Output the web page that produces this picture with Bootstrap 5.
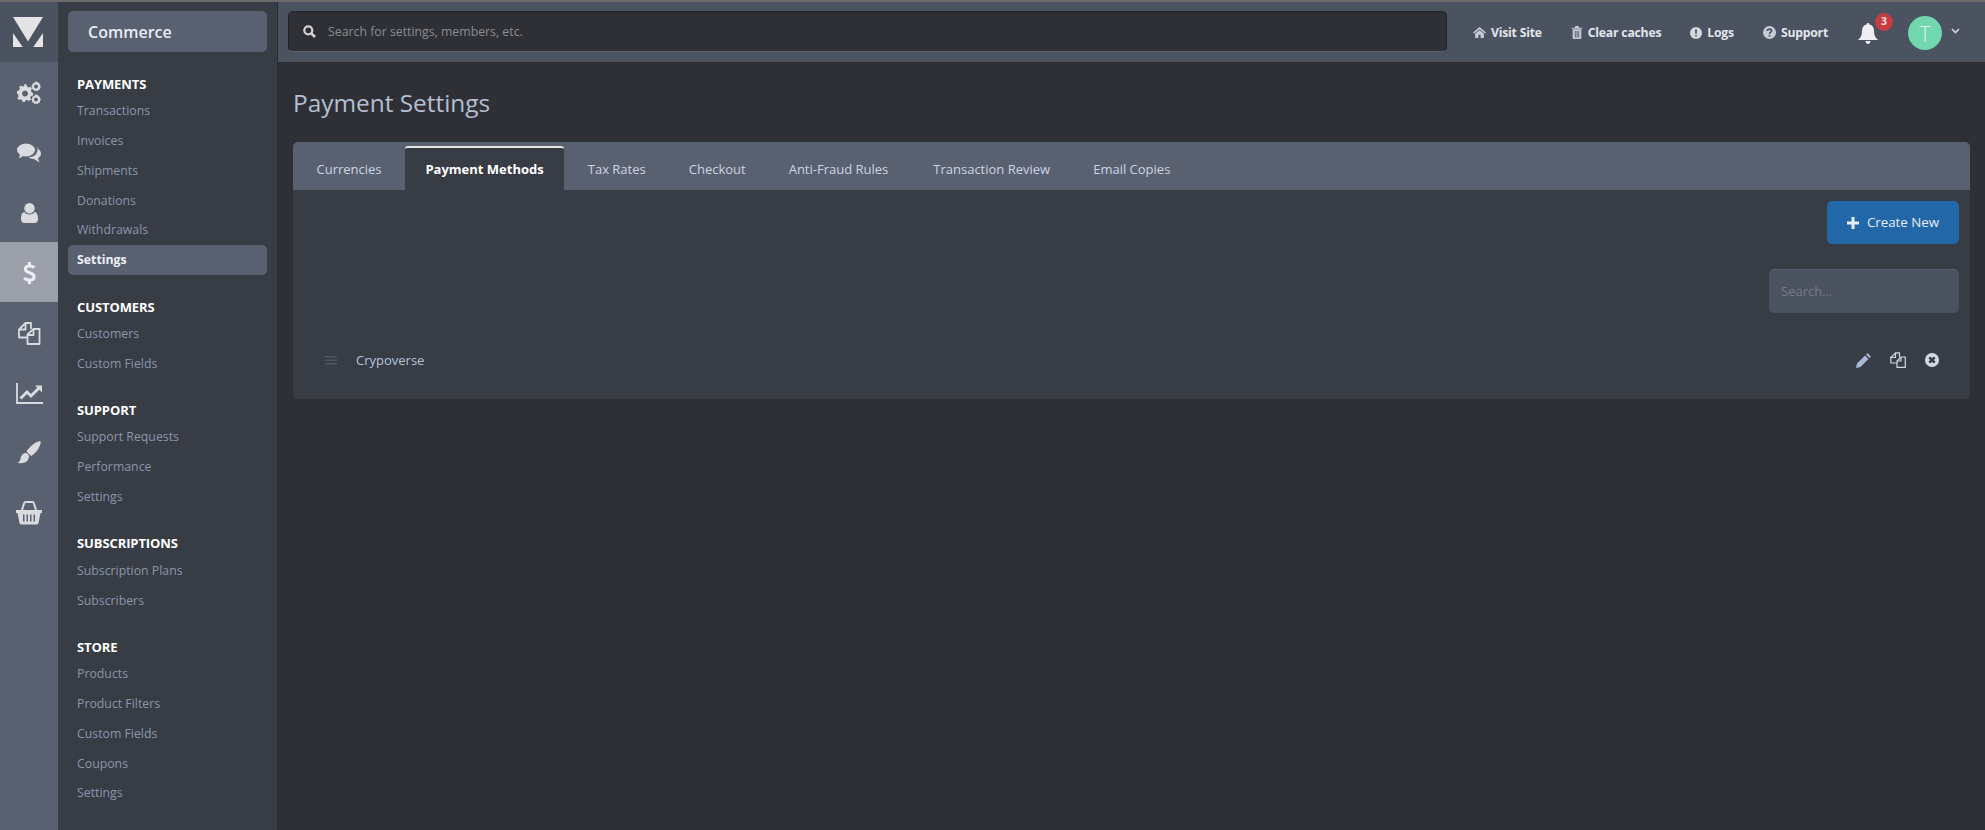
<!DOCTYPE html>
<html lang="en"><head><meta charset="utf-8"><title>Payment Settings</title>
<link href="https://cdn.jsdelivr.net/npm/bootstrap@5.3.0/dist/css/bootstrap.min.css" rel="stylesheet">
<style>
html,body{height:100%;overflow:hidden}
body{background:#2f3036;font-family:"Open Sans",sans-serif;font-size:13px;color:#b4bfd4}
.shell{height:830px;border-top:2px solid #6b6b6b}
.rail{width:58px;background:#596070;flex:none}
.rail-logo{height:60px;background:#4b5361}
.rail-logo svg{margin-right:2px}
.rail-item{height:60px;color:#d9dbdf}
.rail-item svg{margin-top:2px}
.rail-item.on{background:#9a9fa9}
.side{width:220px;background:#383c45;flex:none;border-right:1px solid #2c2d32;padding:9px 10px 0 10px}
.side-title{height:41px;background:#596070;border-radius:5px;color:#e9edf5;font-size:16px;font-weight:600;padding-left:20px;margin-bottom:22px}
.sec-h{color:#fff;font-weight:700;font-size:13px;padding-left:9px;height:20px;line-height:20px;text-transform:uppercase;margin-bottom:2.3px;letter-spacing:-.1px}
.sec{margin-bottom:21.6px}
.side-link{display:block;height:29.8px;line-height:30.8px;padding-left:9px;color:#8a97ac;text-decoration:none;border-radius:5px;font-size:12.3px}
.side-link.on{background:#596070;color:#edf0f5;font-weight:700}
.topbar{height:61px;background:#4b5361;padding:0 25px 1px 10px;border-bottom:1px solid #2c2d32;flex:none}
.top-search{height:41px;width:1159px;background:#2f3036;border:1px solid #23242a;border-bottom-color:#596070;border-radius:5px;padding-left:14px;color:#8a8d94;gap:12px;font-size:12.3px}
.top-search span{padding-top:2px}
.top-right{padding-top:3px}
.top-link{color:#e3e6eb;font-weight:700;font-size:12.2px;text-decoration:none;gap:5px;letter-spacing:-.2px;margin-right:29px}
.bell-wrap{width:20px;margin-right:30px;margin-left:1px}
.bell-badge{top:-10px;left:17px;width:18px;height:18px;background:#c73c3e;color:#f3e3e3;font-size:10.5px;font-weight:700}
.avatar{width:34px;height:34px;background:#70d7ae;color:#dff1ea;font-size:22px;font-weight:300}
.caret-up{margin-left:9px;margin-top:-4px}
.page-h{color:#b4bfd4;font-size:24.4px;font-weight:500;margin:0;line-height:33px;padding:23px 0 23px 15px}
.panel{margin:0 15px;background:#383c45;border-radius:5px;height:257px}
.tabs-head{height:48px;background:#596070;border-radius:5px 5px 0 0}
.tab-i{height:44px;margin-top:4px;padding:0 21.5px;line-height:46px;color:#ccd5e3;text-decoration:none;font-size:13px}
.tab-first{padding:0 23.500px}
.tab-tax{padding:0 21.5px 0 23.7px}
.tab-wide{padding:0 23.5px 0 21.5px}
.tab-i.on{background:#383c45;color:#fff;font-weight:700;border-top:2px solid #e6e6e6;border-radius:3px 3px 0 0;line-height:42px;padding:0;width:159px;text-align:center}
.make-btn{width:132px;height:43px;background:#2268a8;color:#e6edf5;border-radius:5px;font-size:13.3px;gap:8px;margin:11px 11px 0 0;padding:1px 0 0;border:0}
.find-box{width:190px;height:44px;background:#4b5361;border:0;border-top:1px solid #596070;border-radius:5px;margin:25px 11px 0 0;padding-left:12px;color:#767b86;font-size:13px}
.row-line{height:46px;margin-top:24px;padding:0 31px 0 32px;color:#b4c4dc}
.row-name{padding-top:2px}
.row-acts{gap:19px;color:#b4c4dc}
.grip{color:#4f545f;margin-right:19px}
</style></head><body>
<div class="shell d-flex">
 <nav class="rail d-flex flex-column">
  <div class="rail-logo d-flex align-items-center justify-content-center">
   <svg width="30" height="30" viewBox="0 0 30 30"><path fill="#e4e4e4" d="M0 0H30L15 24.6ZM0 16 9.700 30H0ZM30 16V30H20.300Z"/></svg>
  </div>
  <div class="rail-item d-flex align-items-center justify-content-center"><svg width="24" height="24" viewBox="0 0 24 24" fill="currentColor"><path fill-rule="evenodd" d="M7 4.500 9.500 5l.5 2 2 1 1.500-.8 1.500 2-1 1.400.3 2 1.700 1v2.400l-2 .5-.8 1.800.8 1.700-2 1.500-1.400-1-2 .3-1 1.700H5.600l-.5-1.900-1.800-.9-1.800.8L.5 18.500l1-1.500-.3-2L0 14v-2.500l2-.5.9-1.800-.8-1.800 2-1.500 1.500 1 1.900-.4ZM8 11a3 3 0 1 0 .01 0Z" transform="translate(0 -1.500)"/><path fill-rule="evenodd" d="M18.500 0l1 1.300 1.500-.5.700 1.700 1.600.4-.3 1.700 1 1.200-1.200 1.100.2 1.700-1.700.3-.9 1.400-1.500-.8-1.500.6-.8-1.500-1.700-.4.3-1.700-1-1.300 1.200-1.100 0-1.700 1.700-.2ZM19 3.500a2 2 0 1 0 .01 0Z"/><path fill-rule="evenodd" d="M18.500 13l1 1.300 1.500-.5.700 1.700 1.600.4-.3 1.700 1 1.200-1.200 1.100.2 1.700-1.700.3-.9 1.400-1.500-.8-1.500.6-.8-1.500-1.700-.4.3-1.700-1-1.300 1.200-1.100 0-1.700 1.700-.2ZM19 16.500a2 2 0 1 0 .01 0Z"/></svg></div>
  <div class="rail-item d-flex align-items-center justify-content-center"><svg width="24" height="20" viewBox="0 0 24 20" fill="currentColor"><ellipse cx="9" cy="7" rx="9" ry="6.500"/><path d="M3 11 2 15.500 8 12Z"/><path d="M19.500 4.500C22 6 24 8 24 10.500c0 2-1.300 3.700-3 4.700l1.500 4.300-5.500-3.500c-2 0-4.200-.7-5.500-1.800 5 0 10-3 9-10Z"/></svg></div>
  <div class="rail-item d-flex align-items-center justify-content-center"><svg width="17" height="20" viewBox="0 0 18 21" fill="currentColor"><circle cx="9" cy="5.500" r="5.500"/><path d="M3.500 9.500C5 11.500 7 12 9 12s4-.5 5.500-2.500C17 10 18 13 18 17c0 2.500-1.500 4-3.500 4h-11C1.500 21 0 19.500 0 17c0-4 1-7 3.500-7.500Z"/></svg></div>
  <div class="rail-item on d-flex align-items-center justify-content-center"><svg width="13" height="22" viewBox="0 0 14 26" fill="none" stroke="#eceef2" stroke-width="3.600"><path d="M12.500 7C11.500 5.500 9.500 4.700 7 4.700 4 4.700 2 6 2 8.300c0 5.500 10.500 3.200 10.500 9 0 2.500-2.300 4-5.500 4-2.700 0-5-1-6-2.800"/><path d="M7 0v4.500M7 21v5"/></svg></div>
  <div class="rail-item d-flex align-items-center justify-content-center"><svg width="24" height="24" viewBox="0 0 24 24" fill="none" stroke="currentColor" stroke-width="1.800" stroke-linejoin="round"><path d="M10.500 16.500H2V8.500L8.500 2H14V8"/><path d="M8.500 2V8.500H2"/><path d="M10.500 23V13.500L16.500 8H22.500V23Z"/><path d="M16.500 8V14H10.500"/></svg></div>
  <div class="rail-item d-flex align-items-center justify-content-center"><svg width="27" height="21" viewBox="0 0 27 21" fill="none" stroke="currentColor"><path stroke-width="1.800" d="M1 0V20H27"/><path stroke-width="3" d="M4.500 15.500 11 9l4 4 8-8"/><path fill="currentColor" stroke="none" d="M19 2.500H26V9.500Z"/></svg></div>
  <div class="rail-item d-flex align-items-center justify-content-center"><svg width="24" height="24" viewBox="0 0 24 24" fill="currentColor"><path d="M23.500.500C24.500 1.500 22 8 18.500 11.500c-1.500 1.500-3 2.800-4.500 3.500L9.500 10.500C10.500 9 12 7 13.500 5.500 17 2 22.500-.5 23.500.500Z"/><path d="M8.500 12c2 0 3.800 1.800 3.500 4-.4 3.500-3 5.500-6 6-2.500.4-4.500.2-5.500-.500 1.500-.7 2.700-1.500 3-3.500.4-3.500 2.500-6 5-6Z"/></svg></div>
  <div class="rail-item d-flex align-items-center justify-content-center"><svg width="26" height="24" viewBox="0 0 26 24"><path fill="none" stroke="currentColor" stroke-width="2" d="M6 9 8 2.500Q8.300 1 10 1H16Q17.700 1 18 2.500L20 9"/><path fill="currentColor" d="M0 9H26V12H24.500L22.500 22Q22.200 23.500 20.500 23.500H5.500Q3.800 23.500 3.500 22L1.500 12H0Z"/><path fill="#596070" d="M7 13.500H8.500V20.500H7ZM10.500 13.500H12V20.500H10.500ZM14 13.500H15.500V20.500H14ZM17.500 13.500H19V20.500H17.500Z"/></svg></div>
 </nav>
 <aside class="side">
  <div class="side-title d-flex align-items-center">Commerce</div>
  <div class="sec"><div class="sec-h">Payments</div>
   <a class="side-link" href="#">Transactions</a><a class="side-link" href="#">Invoices</a><a class="side-link" href="#">Shipments</a><a class="side-link" href="#">Donations</a><a class="side-link" href="#">Withdrawals</a><a class="side-link on" href="#">Settings</a></div>
  <div class="sec"><div class="sec-h">Customers</div>
   <a class="side-link" href="#">Customers</a><a class="side-link" href="#">Custom Fields</a></div>
  <div class="sec"><div class="sec-h">Support</div>
   <a class="side-link" href="#">Support Requests</a><a class="side-link" href="#">Performance</a><a class="side-link" href="#">Settings</a></div>
  <div class="sec"><div class="sec-h">Subscriptions</div>
   <a class="side-link" href="#">Subscription Plans</a><a class="side-link" href="#">Subscribers</a></div>
  <div class="sec"><div class="sec-h">Store</div>
   <a class="side-link" href="#">Products</a><a class="side-link" href="#">Product Filters</a><a class="side-link" href="#">Custom Fields</a><a class="side-link" href="#">Coupons</a><a class="side-link" href="#">Settings</a></div>
 </aside>
 <div class="flex-grow-1 d-flex flex-column">
  <header class="topbar d-flex align-items-center">
   <div class="top-search d-flex align-items-center">
    <svg width="13" height="13" viewBox="0 0 13 13" fill="none" stroke="#d5d5d5" stroke-width="2.200"><circle cx="5.300" cy="5.300" r="4"/><path d="M8.300 8.300 12 12" stroke-width="2.600"/></svg>
    <span>Search for settings, members, etc.</span>
   </div>
   <div class="top-right d-flex align-items-center ms-auto">
    <a class="top-link d-flex align-items-center" href="#"><svg width="13" height="11" viewBox="0 0 12 10" fill="#c7ccd4"><path d="M6 0 12 5 11 6 6 2 1 6 0 5ZM2 6 6 3 10 6V10H7V7H5V10H2Z"/></svg>Visit Site</a>
    <a class="top-link d-flex align-items-center" href="#"><svg width="12" height="13" viewBox="0 0 10 12" fill="#c7ccd4"><path d="M3.500 0H6.500L7 1.500H10V2.500H0V1.500H3ZM1 3H9V11Q9 12 8 12H2Q1 12 1 11ZM3 4.500V10.500H3.800V4.500ZM4.600 4.500V10.500H5.400V4.500ZM6.200 4.500V10.500H7V4.500Z"/></svg>Clear caches</a>
    <a class="top-link d-flex align-items-center" href="#"><svg width="12" height="12" viewBox="0 0 12 12"><circle cx="6" cy="6" r="6" fill="#d5d8dd"/><path fill="#4b5361" d="M5 2.500H7L6.700 7H5.300ZM5.200 8H6.800V9.500H5.200Z"/></svg>Logs</a>
    <a class="top-link d-flex align-items-center" href="#"><svg width="13" height="13" viewBox="0 0 12 12"><circle cx="6" cy="6" r="6" fill="#c7ccd4"/><path fill="none" stroke="#4b5361" stroke-width="1.500" d="M4 4.500C4 3.300 5 2.900 6 2.900S8 3.500 8 4.500C8 5.700 6 5.700 6 7.300"/><path fill="#4b5361" d="M5.200 8.200H6.800V9.700H5.200Z"/></svg>Support</a>
    <div class="bell-wrap position-relative d-flex"><svg width="20" height="21" viewBox="0 0 20 21" fill="#edeff2"><path d="M10 0C11 0 11.500.7 11.500 1.500 14.500 2.200 16 4.500 16 8 16 12 17 14.500 20 17H0C3 14.500 4 12 4 8 4 4.500 5.500 2.200 8.500 1.500 8.500.7 9 0 10 0ZM7.500 18H12.500C12.500 19.500 11.500 21 10 21S7.500 19.500 7.500 18Z"/></svg>
     <span class="bell-badge position-absolute rounded-circle d-flex align-items-center justify-content-center">3</span></div>
    <div class="avatar rounded-circle d-flex align-items-center justify-content-center">T</div>
    <svg class="caret-up" width="9" height="6" viewBox="0 0 9 6" fill="none" stroke="#d5d8dd" stroke-width="1.600"><path d="M1 1 4.500 4.500 8 1"/></svg>
   </div>
  </header>
  <main class="flex-grow-1">
   <h1 class="page-h">Payment Settings</h1>
   <section class="panel d-flex flex-column">
    <div class="tabs-head d-flex">
     <a class="tab-i tab-first" href="#">Currencies</a><a class="tab-i on" href="#">Payment Methods</a><a class="tab-i tab-tax" href="#">Tax Rates</a><a class="tab-i" href="#">Checkout</a><a class="tab-i tab-wide" href="#">Anti-Fraud Rules</a><a class="tab-i" href="#">Transaction Review</a><a class="tab-i" href="#">Email Copies</a>
    </div>
    <div class="d-flex justify-content-end"><button class="make-btn btn d-flex align-items-center justify-content-center"><svg width="12" height="12" viewBox="0 0 12 12" fill="#e6edf5"><path d="M4.500 0H7.500V4.500H12V7.500H7.500V12H4.500V7.500H0V4.500H4.500Z"/></svg>Create New</button></div>
    <div class="d-flex justify-content-end"><div class="find-box d-flex align-items-center">Search...</div></div>
    <div class="row-line d-flex align-items-center">
     <svg class="grip" width="12" height="9" viewBox="0 0 12 9" fill="currentColor"><path d="M0 0H12V1.500H0ZM0 3.500H12V5H0ZM0 7H12V8.500H0Z"/></svg>
     <span class="row-name">Crypoverse</span>
     <div class="row-acts d-flex align-items-center ms-auto">
      <svg width="15" height="15" viewBox="0 0 15 15" fill="#a9b9d4"><path d="M11.500 0 15 3.500 13.500 5 10 1.500ZM9 2.500 12.500 6 4.500 14 0 15 1 10.500Z"/></svg>
      <svg width="16" height="16" viewBox="0 0 16 16" fill="none" stroke="#d0d9e8" stroke-width="1.200" stroke-linejoin="round"><path d="M7 11H.8V5.500L5.500.8H9.500V5"/><path d="M5.500.8V5.500H.8"/><path d="M7 15.300V9L11 5H15.300V15.300Z"/><path d="M11 5V9H7"/></svg>
      <svg width="14" height="14" viewBox="0 0 14 14"><circle cx="7" cy="7" r="7" fill="#d0d9e8"/><path stroke="#383c45" stroke-width="2.600" d="M4.300 4.300 9.700 9.700M9.700 4.300 4.300 9.700"/></svg>
     </div>
    </div>
   </section>
  </main>
 </div>
</div>
<script src="https://cdn.jsdelivr.net/npm/bootstrap@5.3.0/dist/js/bootstrap.bundle.min.js"></script>
</body></html>
